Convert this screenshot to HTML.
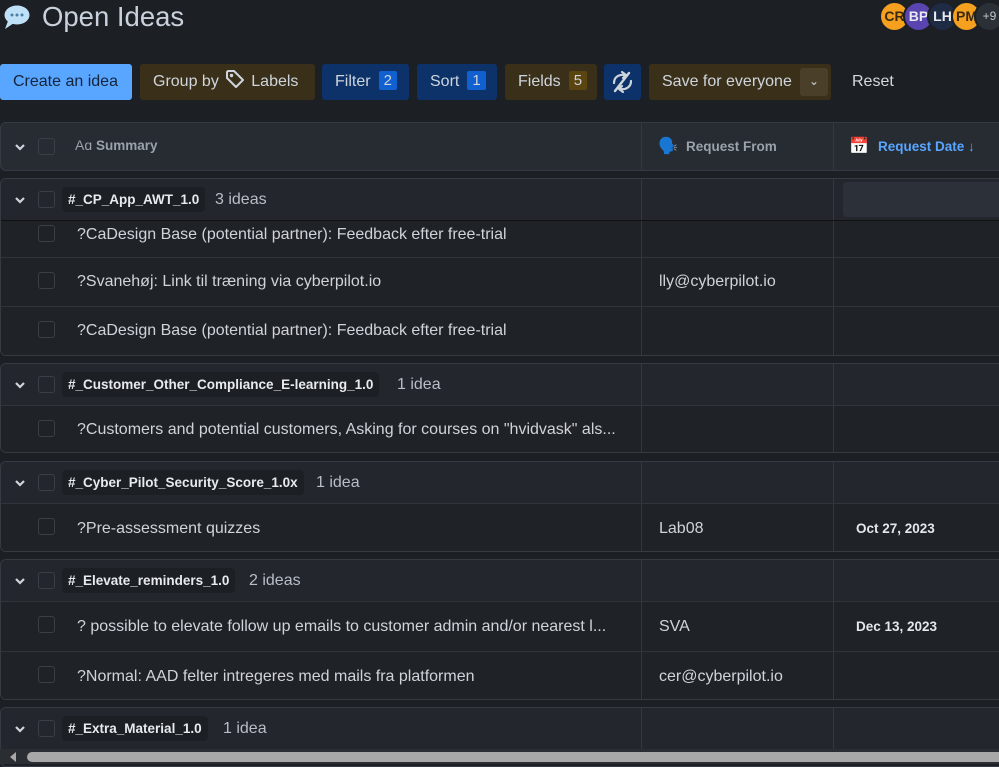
<!DOCTYPE html><html><head><meta charset="utf-8"><style>
*{box-sizing:border-box;margin:0;padding:0}
body{width:999px;height:764px;overflow:hidden;background:#1c1f24;font-family:"Liberation Sans",sans-serif;color:#d5d9df;position:relative}
.abs{position:absolute}
.btn{position:absolute;top:64px;height:36px;border-radius:3px;font-size:16px;line-height:36px;padding-left:13px;color:#cfd5dc}
.badge{display:inline-block;height:19px;line-height:19px;padding:0 5px;border-radius:2px;margin-left:8px;font-size:15px;vertical-align:1px}
.box{position:absolute;left:0;width:1010px;border:1px solid #363b43;border-radius:6px;overflow:hidden}
.r{position:relative;border-top:1px solid #30343b;background:#1f2227}
.r:first-child{border-top:none}
.g{background:#23272d}
.c1,.c2{position:absolute;top:0;bottom:0;width:1px;background:#33383f}
.c1{left:640px}.c2{left:832px}
.cb{position:absolute;left:37px;width:17px;height:17px;border:1.5px solid #3a3f47;border-radius:3px}
.chev{position:absolute;left:13px;width:12px;height:8px}
.tag{position:absolute;left:61px;height:25px;line-height:25px;padding:0 6px;background:#1c1f24;border-radius:4px;font-weight:bold;font-size:13.5px;color:#e7eaee}
.cnt{position:absolute;font-size:16px;color:#b8bec6}
.t{position:absolute;left:76px;font-size:16px;color:#d0d4da;white-space:nowrap}
.f{position:absolute;left:658px;font-size:16px;color:#d0d4da}
.d{position:absolute;left:855px;font-size:13.5px;font-weight:bold;color:#e4e7eb}
.av{position:absolute;top:1px;width:31px;height:31px;border-radius:50%;font-size:14px;line-height:27px;text-align:center;color:#e8eaee;border:2px solid #1c1f24;font-weight:bold}
</style></head><body>
<svg class="abs" style="left:3px;top:4px" width="28" height="26" viewBox="0 0 28 26"><ellipse cx="14" cy="11" rx="12.5" ry="9.5" fill="#bfe1f7"/><path d="M5 17 L2 25 L11 19Z" fill="#bfe1f7"/><circle cx="9" cy="11" r="1.5" fill="#4a7fa8"/><circle cx="14" cy="11" r="1.5" fill="#4a7fa8"/><circle cx="19" cy="11" r="1.5" fill="#4a7fa8"/></svg>
<div class="abs" style="left:42px;top:1px;font-size:27.5px;color:#c9d2dc">Open Ideas</div>
<div class="av" style="left:879px;background:#f5a01f;color:#3a2a10">CR</div>
<div class="av" style="left:903px;background:#5a45b0">BP</div>
<div class="av" style="left:927px;background:#1e2b44">LH</div>
<div class="av" style="left:951px;background:#f5a01f;color:#3a2a10">PM</div>
<div class="av" style="left:974px;background:#2b2f36;font-size:12px;color:#c0c5cc;font-weight:normal">+9</div>

<div class="btn" style="left:0;width:132px;background:#58a6ff;color:#16243a">Create an idea</div>
<div class="btn" style="left:140px;width:175px;background:#3a301a">Group by <svg width="20" height="20" viewBox="0 0 20 20" style="vertical-align:-3px;margin:0 6px 0 2px"><path d="M2 3 L2 9 L11 18 L18 11 L9 2 L3 2Z" fill="none" stroke="#cfd5dc" stroke-width="2" stroke-linejoin="round"/><circle cx="6.5" cy="6.5" r="1.7" fill="#cfd5dc"/></svg>Labels</div>
<div class="btn" style="left:322px;width:87px;background:#0c3269">Filter<span class="badge" style="background:#1060d0">2</span></div>
<div class="btn" style="left:417px;width:80px;background:#0c3269">Sort<span class="badge" style="background:#1060d0">1</span></div>
<div class="btn" style="left:505px;width:92px;background:#3a301a">Fields<span class="badge" style="background:#5a4510">5</span></div>
<div class="btn" style="left:604px;width:37px;background:#0c3269;padding:0"><svg width="37" height="36" viewBox="0 0 37 36"><path d="M10 19 C10 13 15 10 21 11" fill="none" stroke="#cfd5dc" stroke-width="2.2" stroke-linecap="round"/><path d="M18 8 L22 11 L19 14" fill="none" stroke="#cfd5dc" stroke-width="2.2" stroke-linecap="round" stroke-linejoin="round"/><path d="M27 17 C27 23 22 26 16 25" fill="none" stroke="#cfd5dc" stroke-width="2.2" stroke-linecap="round"/><path d="M19 28 L15 25 L18 22" fill="none" stroke="#cfd5dc" stroke-width="2.2" stroke-linecap="round" stroke-linejoin="round"/><path d="M11 27 L25 9" stroke="#cfd5dc" stroke-width="2.4" stroke-linecap="round"/></svg></div>
<div class="btn" style="left:649px;width:182px;background:#3a301a">Save for everyone<div class="abs" style="left:151px;top:4px;width:28px;height:28px;background:#4a3f28;border-radius:3px;text-align:center;line-height:26px;font-size:12px">⌄</div></div>
<div class="abs" style="left:852px;top:73px;font-size:16px;color:#d5d9df">Reset</div>

<div class="box" style="top:122px;height:49px;background:#272b32">
<div class="c1"></div><div class="c2"></div>
<svg class="chev" style="top:20px" viewBox="0 0 12 8"><path d="M2 2 L6 6 L10 2" fill="none" stroke="#cfd5dc" stroke-width="2.2"/></svg>
<div class="cb" style="top:15px"></div>
<div class="abs" style="left:74px;top:14px;font-size:14px;color:#9aa2ac">Aɑ <b style="font-size:13.5px">Summary</b></div>
<div class="abs" style="left:657px;top:13px;font-size:16px">🗣️</div>
<div class="abs" style="left:685px;top:16px;font-size:13.5px;font-weight:bold;color:#9aa2ac">Request From</div>
<div class="abs" style="left:848px;top:13px;font-size:16px">📅</div>
<div class="abs" style="left:877px;top:16px;font-size:13.5px;font-weight:bold;color:#58a6ff">Request Date ↓</div>
</div>

<div class="box" style="top:178px;height:178px">
<div class="r g" style="height:41px"><div class="c1"></div><div class="c2"></div><svg class="chev" style="top:17px" viewBox="0 0 12 8"><path d="M2 2 L6 6 L10 2" fill="none" stroke="#cfd5dc" stroke-width="2.2"/></svg><div class="cb" style="top:12px"></div><div class="tag" style="top:8px">#_CP_App_AWT_1.0</div><div class="cnt" style="left:214px;top:12px">3 ideas</div><div class="abs" style="left:842px;top:3px;width:170px;height:35px;background:#2c3038;border-radius:4px"></div></div>
<div class="r" style="height:37px;border-top:1px solid #111"><div class="c1"></div><div class="c2"></div><div class="cb" style="top:4px"></div><div class="t" style="top:5px">?CaDesign Base (potential partner): Feedback efter free-trial</div></div>
<div class="r" style="height:49px"><div class="c1"></div><div class="c2"></div><div class="cb" style="top:14px"></div><div class="t" style="top:15px">?Svanehøj: Link til træning via cyberpilot.io</div><div class="f" style="top:15px">lly@cyberpilot.io</div></div>
<div class="r" style="height:50px"><div class="c1"></div><div class="c2"></div><div class="cb" style="top:14px"></div><div class="t" style="top:15px">?CaDesign Base (potential partner): Feedback efter free-trial</div></div>
</div>

<div class="box" style="top:363px;height:90px">
<div class="r g" style="height:41px"><div class="c1"></div><div class="c2"></div><svg class="chev" style="top:17px" viewBox="0 0 12 8"><path d="M2 2 L6 6 L10 2" fill="none" stroke="#cfd5dc" stroke-width="2.2"/></svg><div class="cb" style="top:12px"></div><div class="tag" style="top:8px">#_Customer_Other_Compliance_E-learning_1.0</div><div class="cnt" style="left:396px;top:12px">1 idea</div></div>
<div class="r" style="height:49px"><div class="c1"></div><div class="c2"></div><div class="cb" style="top:14px"></div><div class="t" style="top:15px">?Customers and potential customers, Asking for courses on "hvidvask" als...</div></div>
</div>

<div class="box" style="top:461px;height:91px">
<div class="r g" style="height:41px"><div class="c1"></div><div class="c2"></div><svg class="chev" style="top:17px" viewBox="0 0 12 8"><path d="M2 2 L6 6 L10 2" fill="none" stroke="#cfd5dc" stroke-width="2.2"/></svg><div class="cb" style="top:12px"></div><div class="tag" style="top:8px">#_Cyber_Pilot_Security_Score_1.0x</div><div class="cnt" style="left:315px;top:12px">1 idea</div></div>
<div class="r" style="height:50px"><div class="c1"></div><div class="c2"></div><div class="cb" style="top:14px"></div><div class="t" style="top:16px">?Pre-assessment quizzes</div><div class="f" style="top:16px">Lab08</div><div class="d" style="top:17px">Oct 27, 2023</div></div>
</div>

<div class="box" style="top:559px;height:141px">
<div class="r g" style="height:41px"><div class="c1"></div><div class="c2"></div><svg class="chev" style="top:17px" viewBox="0 0 12 8"><path d="M2 2 L6 6 L10 2" fill="none" stroke="#cfd5dc" stroke-width="2.2"/></svg><div class="cb" style="top:12px"></div><div class="tag" style="top:8px">#_Elevate_reminders_1.0</div><div class="cnt" style="left:248px;top:12px">2 ideas</div></div>
<div class="r" style="height:50px"><div class="c1"></div><div class="c2"></div><div class="cb" style="top:14px"></div><div class="t" style="top:16px">? possible to elevate follow up emails to customer admin and/or nearest l...</div><div class="f" style="top:16px">SVA</div><div class="d" style="top:17px">Dec 13, 2023</div></div>
<div class="r" style="height:50px"><div class="c1"></div><div class="c2"></div><div class="cb" style="top:14px"></div><div class="t" style="top:16px">?Normal: AAD felter intregeres med mails fra platformen</div><div class="f" style="top:16px">cer@cyberpilot.io</div></div>
</div>

<div class="box" style="top:707px;height:60px">
<div class="r g" style="height:41px"><div class="c1"></div><div class="c2"></div><svg class="chev" style="top:17px" viewBox="0 0 12 8"><path d="M2 2 L6 6 L10 2" fill="none" stroke="#cfd5dc" stroke-width="2.2"/></svg><div class="cb" style="top:12px"></div><div class="tag" style="top:8px">#_Extra_Material_1.0</div><div class="cnt" style="left:222px;top:12px">1 idea</div></div>
</div>

<div class="abs" style="left:0;top:749px;width:999px;height:15px;background:#2a2d31"></div>
<svg class="abs" style="left:8px;top:751px" width="10" height="12" viewBox="0 0 10 12"><path d="M8 1 L2 6 L8 11Z" fill="#a8a8a8"/></svg>
<div class="abs" style="left:27px;top:752px;width:980px;height:10px;background:#a8a8a8;border-radius:5px"></div>
</body></html>
